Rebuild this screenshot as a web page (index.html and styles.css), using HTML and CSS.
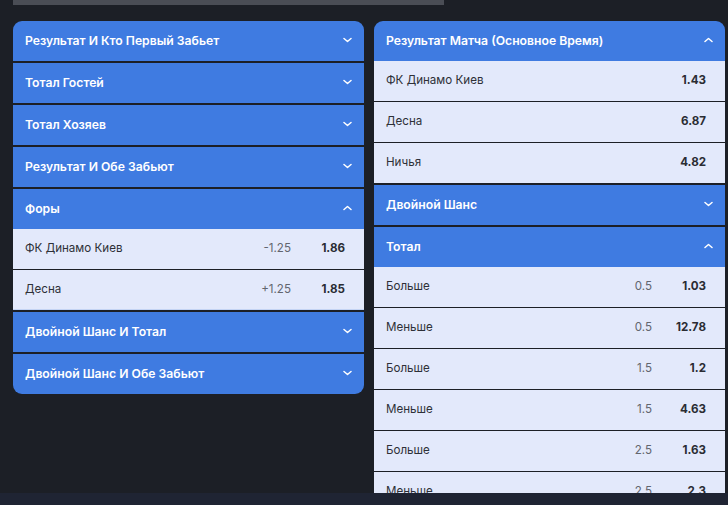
FILE: index.html
```html
<!DOCTYPE html>
<html lang="ru">
  <head>
    <meta charset="UTF-8" />
    <meta name="viewport" content="width=device-width, initial-scale=1.0" />
    <title>Markets</title>
    <link rel="stylesheet" href="styles.css">
  </head>
  <body>
    <div class="page">
      <div class="scrollThumb"></div>
      <div class="markets">
        <div class="market__col">
          <div class="market__card">
            <div class="market__group">
              <div class="market__head">
                <span>Результат И Кто Первый Забьет</span>
                <svg class="chev" width="9" height="6" viewBox="0 0 9 6"><polyline points="1,1.5 4.5,4.5 8,1.5" /></svg>
              </div>
            </div>
            <div class="market__group">
              <div class="market__head">
                <span>Тотал Гостей</span>
                <svg class="chev" width="9" height="6" viewBox="0 0 9 6"><polyline points="1,1.5 4.5,4.5 8,1.5" /></svg>
              </div>
            </div>
            <div class="market__group">
              <div class="market__head">
                <span>Тотал Хозяев</span>
                <svg class="chev" width="9" height="6" viewBox="0 0 9 6"><polyline points="1,1.5 4.5,4.5 8,1.5" /></svg>
              </div>
            </div>
            <div class="market__group">
              <div class="market__head">
                <span>Результат И Обе Забьют</span>
                <svg class="chev" width="9" height="6" viewBox="0 0 9 6"><polyline points="1,1.5 4.5,4.5 8,1.5" /></svg>
              </div>
            </div>
            <div class="market__group">
              <div class="market__head">
                <span>Форы</span>
                <svg class="chev" width="9" height="6" viewBox="0 0 9 6"><polyline points="1,4.5 4.5,1.5 8,4.5" /></svg>
              </div>
              <div class="market__row">
                <span class="row__name">ФК Динамо Киев</span>
                <span class="row__value">-1.25</span>
                <span class="row__odds">1.86</span>
              </div>
              <div class="market__row market__row--last">
                <span class="row__name">Десна</span>
                <span class="row__value">+1.25</span>
                <span class="row__odds">1.85</span>
              </div>
            </div>
            <div class="market__group">
              <div class="market__head">
                <span>Двойной Шанс И Тотал</span>
                <svg class="chev" width="9" height="6" viewBox="0 0 9 6"><polyline points="1,1.5 4.5,4.5 8,1.5" /></svg>
              </div>
            </div>
            <div class="market__group">
              <div class="market__head">
                <span>Двойной Шанс И Обе Забьют</span>
                <svg class="chev" width="9" height="6" viewBox="0 0 9 6"><polyline points="1,1.5 4.5,4.5 8,1.5" /></svg>
              </div>
            </div>
          </div>
        </div>

        <div class="market__col">
          <div class="market__card">
            <div class="market__group">
              <div class="market__head">
                <span>Результат Матча (Основное Время)</span>
                <svg class="chev" width="9" height="6" viewBox="0 0 9 6"><polyline points="1,4.5 4.5,1.5 8,4.5" /></svg>
              </div>
              <div class="market__row">
                <span class="row__name">ФК Динамо Киев</span>
                <span class="row__odds">1.43</span>
              </div>
              <div class="market__row">
                <span class="row__name">Десна</span>
                <span class="row__odds">6.87</span>
              </div>
              <div class="market__row">
                <span class="row__name">Ничья</span>
                <span class="row__odds">4.82</span>
              </div>
            </div>
            <div class="market__group">
              <div class="market__head">
                <span>Двойной Шанс</span>
                <svg class="chev" width="9" height="6" viewBox="0 0 9 6"><polyline points="1,1.5 4.5,4.5 8,1.5" /></svg>
              </div>
            </div>
            <div class="market__group">
              <div class="market__head">
                <span>Тотал</span>
                <svg class="chev" width="9" height="6" viewBox="0 0 9 6"><polyline points="1,4.5 4.5,1.5 8,4.5" /></svg>
              </div>
              <div class="market__row">
                <span class="row__name">Больше</span>
                <span class="row__value">0.5</span>
                <span class="row__odds">1.03</span>
              </div>
              <div class="market__row">
                <span class="row__name">Меньше</span>
                <span class="row__value">0.5</span>
                <span class="row__odds">12.78</span>
              </div>
              <div class="market__row">
                <span class="row__name">Больше</span>
                <span class="row__value">1.5</span>
                <span class="row__odds">1.2</span>
              </div>
              <div class="market__row">
                <span class="row__name">Меньше</span>
                <span class="row__value">1.5</span>
                <span class="row__odds">4.63</span>
              </div>
              <div class="market__row">
                <span class="row__name">Больше</span>
                <span class="row__value">2.5</span>
                <span class="row__odds">1.63</span>
              </div>
              <div class="market__row">
                <span class="row__name">Меньше</span>
                <span class="row__value">2.5</span>
                <span class="row__odds">2.3</span>
              </div>
            </div>
          </div>
        </div>
      </div>
    </div>
    <div class="footerBand"></div>
  </body>
</html>
```

FILE: styles.css
```css
html,
body {
  margin: 0;
  background-color: #1c1f26;
  font-family: "Inter", "Liberation Sans", sans-serif;
}

.page {
  height: 493px;
  overflow: hidden;
}

.scrollThumb {
  width: 431px;
  height: 5px;
  margin-left: 13px;
  background-color: #4a4d55;
}

.markets {
  display: grid;
  grid-template-columns: 351px 351px;
  column-gap: 10px;
  padding: 16px 0 0 13px;
  align-items: start;
}

.market__card {
  display: flex;
  flex-direction: column;
  gap: 2px;
  border-radius: 9px;
  overflow: hidden;
}

.market__group {
  display: flex;
  flex-direction: column;
}

.market__head {
  display: flex;
  align-items: center;
  justify-content: space-between;
  box-sizing: border-box;
  height: 40px;
  padding: 0 12px 2px 12px;
  background-color: #3f7be1;
  color: #ffffff;
  font-size: 12.2px;
  font-weight: 600;
}

.chev {
  fill: none;
  stroke: #ffffff;
  stroke-width: 1.5;
  stroke-linecap: round;
  stroke-linejoin: round;
}

.market__row {
  display: flex;
  align-items: center;
  box-sizing: border-box;
  height: 40px;
  padding: 0 19px 2px 12px;
  background-color: #e3e9fb;
  color: #2e3037;
  font-size: 11.6px;
}

.market__row + .market__row {
  margin-top: 1px;
}

.market__row--last {
  border-bottom: 1px solid #c4d4f4;
}

.row__name {
  flex: 1;
}

.row__value {
  color: #62656e;
  text-align: right;
}

.row__odds {
  width: 54px;
  text-align: right;
  font-weight: 700;
  color: #2a2c33;
}

.footerBand {
  height: 12px;
  background-color: #1f2433;
}
```
